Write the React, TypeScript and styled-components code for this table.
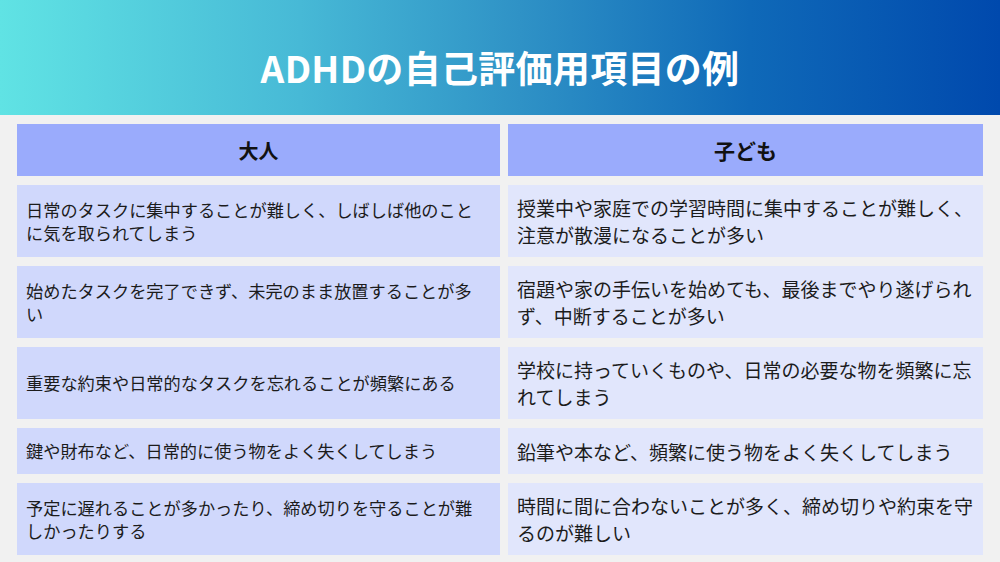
import styled, { createGlobalStyle } from 'styled-components'

const GlobalStyle = createGlobalStyle`
  html, body {
    margin: 0;
    padding: 0;
    background: #f1f1f1;
  }
  body {
    font-family: "Noto Sans CJK JP", "Noto Sans", sans-serif;
    color: #1c1c1c;
  }
`

const Page = styled.div`
  width: 1000px;
  height: 562px;
  overflow: hidden;
  background: #f1f1f1;
`

const TitleBar = styled.header`
  height: 115px;
  box-sizing: border-box;
  padding-top: 18px;
  display: flex;
  align-items: center;
  justify-content: center;
  background: linear-gradient(90deg, #60e3e4 0%, #47b9d6 30%, #2f92c6 52%, #0f69b8 75%, #0049ad 100%);
`

const Title = styled.h1`
  margin: 0;
  font-size: 37px;
  line-height: 44px;
  font-weight: 700;
  color: #ffffff;
  letter-spacing: 0.3px;
`

const Table = styled.div`
  display: grid;
  grid-template-columns: 483px 475px;
  column-gap: 8px;
  row-gap: 9px;
  padding: 9px 17px 0;
`

const HeadCell = styled.div<{ $size: number }>`
  height: 52px;
  display: flex;
  align-items: center;
  justify-content: center;
  background: #9aabfc;
  font-size: ${(p) => p.$size}px;
  font-weight: 700;
  color: #111;
`

const Cell = styled.div<{ $side: 'adult' | 'child' }>`
  display: flex;
  align-items: center;
  box-sizing: border-box;
  min-height: 46px;
  padding: ${(p) => (p.$side === 'adult' ? '9px 20px 9px 9px' : '9px 6px 9px 9px')};
  background: ${(p) => (p.$side === 'adult' ? '#d0d8fc' : '#e1e6fc')};
  font-size: ${(p) => (p.$side === 'adult' ? '17.2px' : '19px')};
  line-height: ${(p) => (p.$side === 'adult' ? '23.5px' : '27px')};
  line-break: strict;
`

const rows: [string, string][] = [
  [
    '日常のタスクに集中することが難しく、しばしば他のことに気を取られてしまう',
    '授業中や家庭での学習時間に集中することが難しく、注意が散漫になることが多い',
  ],
  [
    '始めたタスクを完了できず、未完のまま放置することが多い',
    '宿題や家の手伝いを始めても、最後までやり遂げられず、中断することが多い',
  ],
  [
    '重要な約束や日常的なタスクを忘れることが頻繁にある',
    '学校に持っていくものや、日常の必要な物を頻繁に忘れてしまう',
  ],
  ['鍵や財布など、日常的に使う物をよく失くしてしまう', '鉛筆や本など、頻繁に使う物をよく失くしてしまう'],
  [
    '予定に遅れることが多かったり、締め切りを守ることが難しかったりする',
    '時間に間に合わないことが多く、締め切りや約束を守るのが難しい',
  ],
]

export default function App() {
  return (
    <Page>
      <GlobalStyle />
      <TitleBar>
        <Title>ADHDの自己評価用項目の例</Title>
      </TitleBar>
      <Table>
        <HeadCell $size={20}>大人</HeadCell>
        <HeadCell $size={21}>子ども</HeadCell>
        {rows.map(([adult, child]) => (
          <>
            <Cell key={adult} $side="adult">
              {adult}
            </Cell>
            <Cell key={child} $side="child">
              {child}
            </Cell>
          </>
        ))}
      </Table>
    </Page>
  )
}
